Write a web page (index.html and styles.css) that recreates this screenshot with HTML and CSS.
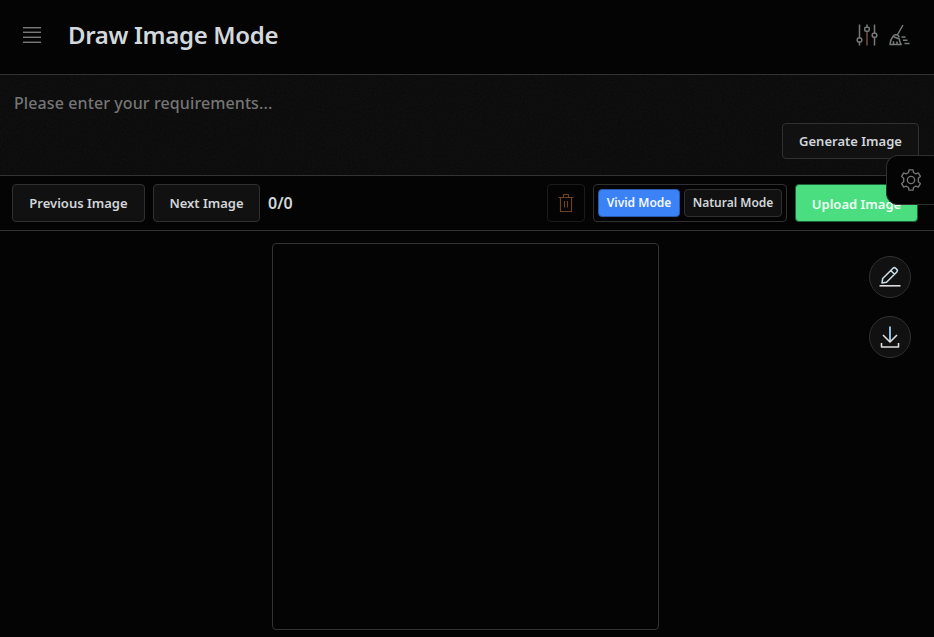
FILE: index.html
```html
<!DOCTYPE html>
<html lang="en">
<head>
<meta charset="utf-8">
<title>Draw Image Mode</title>
<link rel="stylesheet" href="styles.css">
</head>
<body>
<header class="header">
  <svg class="menu" viewBox="0 0 18 16" shape-rendering="crispEdges"><path d="M0 .5h18M0 5.5h18M0 10.500h18M0 15.500h18"/><path class="menu-shade" d="M0 1.500h18M0 4.500h18M0 9.500h18M0 14.500h18"/></svg>
  <h1 class="title">Draw Image Mode</h1>
  <svg class="icon sliders" viewBox="0 0 24 24"><path d="M4.500 1.500v13.500M4.500 19v3.500M12 1.500v2.800M19.500 1.500v8.500M19.500 14v8.500"/><path class="warm" d="M12 8.500v14"/><rect x="2.200" y="15" width="4.600" height="4" rx="1.500"/><rect x="9.700" y="4.300" width="4.600" height="4" rx="1.500"/><rect x="17.200" y="10.200" width="4.600" height="4" rx="1.500"/></svg>
  <svg class="icon broom" viewBox="0 0 24 24"><path d="M15 2 9.300 12M5 13.500c1.500-2.700 5.500-2.200 6.300 1M5 13.500l6.300 2.500c.2 2.300.8 4 1.900 5.500H2c.2-3.700 1.200-6 3-8zM5.500 21v-2.800M9 21.500V18.500M13.500 14h4M15 17.200h4.500M16.500 20.500h5"/></svg>
</header>
<section class="prompt">
  <svg class="grain" aria-hidden="true"><filter id="grain"><feTurbulence type="fractalNoise" baseFrequency=".55" numOctaves="3"/><feColorMatrix type="saturate" values="0"/></filter><rect width="100%" height="100%" filter="url(#grain)"/></svg>
  <div class="placeholder">Please enter your requirements...</div>
  <button class="btn generate">Generate Image</button>
</section>
<section class="toolbar">
  <button class="btn previous">Previous Image</button>
  <button class="btn next">Next Image</button>
  <span class="count">0/0</span>
  <button class="btn trash"><svg viewBox="0 0 18 20"><path d="M1.500 4.500h15M6.500 4V1.500h5V4M3.500 4.500V18.500h11V4.500M7.500 8v6.500M10.500 8v6.500"/></svg></button>
  <div class="modes"><button class="mode vivid">Vivid Mode</button><button class="mode natural">Natural Mode</button></div>
  <button class="btn upload">Upload Image</button>
</section>
<main class="stage">
  <div class="canvas"></div>
  <div class="actions">
    <button class="round"><svg viewBox="0 0 24 24"><path d="M1.500 20.800h21"/><path class="cool" d="M4 18l.7-4.500L15 3.200c.8-.8 1.800-.8 2.600 0l1.200 1.200c.8.8.8 1.800 0 2.600L8.500 17.300zM12.800 5.500l3.700 3.700"/></svg></button>
    <button class="round"><svg viewBox="0 0 24 24"><path class="shaft" d="M12 1.500v15"/><path d="M5 10l7 7 7-7M3.500 18v4h17v-4"/></svg></button>
  </div>
</main>
<button class="settings"><svg viewBox="0 0 24 24"><circle cx="12" cy="12" r="4"/><path d="M9.300 3.800 9.800 1h4.400l.5 2.800 2.600 1.500 2.700-1 2.200 3.800-2.200 1.900v4l2.200 1.900-2.200 3.800-2.700-1-2.600 1.500-.5 2.800H9.800l-.5-2.800-2.600-1.500-2.700 1-2.200-3.800L4 14v-4L1.800 8.100 4 4.300l2.700 1z"/></svg></button>
</body>
</html>
```
FILE: styles.css
```css
* { box-sizing: border-box; }
body {
  margin: 0;
  height: 637px;
  display: flex;
  flex-direction: column;
  overflow: hidden;
  position: relative;
  background: #040404;
  color: #d2d6da;
  font-family: "Noto Sans", sans-serif;
}
svg { display: block; fill: none; stroke: currentColor; stroke-width: 1.5; stroke-linejoin: round; }
button { font: inherit; color: inherit; padding: 0; margin: 0; }
.header {
  flex: none;
  height: 75px;
  padding: 0 22px 0 23px;
  display: flex;
  align-items: center;
  border-bottom: 1px solid #333;
  color: #777a7a;
}
.menu { width: 18px; height: 16px; stroke-width: 1; margin-top: -4px; }
.menu-shade { stroke: #343434; }
.title {
  margin: -4px auto 0 27px;
  color: #d2d8dc;
  font-size: 24px;
  line-height: 34px;
  font-weight: 600;
  letter-spacing: -.33px;
}
.icon { width: 24px; height: 24px; margin-top: -4px; }
.sliders { margin-right: 9px; }
.warm { stroke: #705141; }
.prompt {
  flex: none;
  height: 101px;
  position: relative;
  display: flex;
  flex-direction: column;
  padding: 16px 15px 16px 14px;
  border-bottom: 1px solid #333;
  background: #0a0a0a;
}
.grain { position: absolute; inset: 0; width: 100%; height: 100%; opacity: .04; stroke: none; }
.placeholder { position: relative; font-size: 16px; line-height: 24px; font-weight: 500; letter-spacing: .1px; color: #757575; }
.btn {
  height: 38px;
  border: 1px solid #303030;
  border-radius: 4px;
  background: #111;
  font-size: 13px;
  font-weight: 600;
  white-space: nowrap;
}
.generate { position: relative; width: 137px; height: 36px; margin: auto 0 0 auto; }
.toolbar {
  flex: none;
  height: 55px;
  display: flex;
  align-items: center;
  padding: 0 16px 0 12px;
  border-bottom: 1px solid #333;
}
.previous { width: 133px; margin-right: 8px; }
.next { width: 107px; margin-right: 8px; }
.count { font-size: 16px; font-weight: 600; margin-right: auto; }
.trash { width: 38px; display: grid; place-items: center; background: #040404; border-color: #1b1b1b; color: #6b4229; margin-right: 8px; }
.trash svg { width: 18px; height: 20px; stroke-width: 1.2; }
.modes {
  width: 194px;
  height: 38px;
  display: flex;
  align-items: center;
  gap: 4px;
  padding: 4px;
  border: 1px solid #303030;
  border-radius: 4px;
  margin-right: 8px;
}
.mode { height: 28px; border: 1px solid #303030; border-radius: 4px; background: #111; font-size: 12px; font-weight: 600; padding-bottom: 1px; }
.vivid { width: 82px; background: #3b82f6; border-color: #285bad; color: #f2f7ff; }
.natural { width: 98px; }
.upload { width: 123px; background: #4ade80; border-color: #206238; color: #f2fff6; padding-top: 2px; }
.stage { flex: 1; position: relative; display: flex; justify-content: center; padding: 12px 3px 0 0; }
.canvas { width: 387px; height: 387px; border: 1px solid #333; border-radius: 4px; }
.actions { position: absolute; right: 23px; top: 25px; display: flex; flex-direction: column; gap: 18px; }
.round { width: 42px; height: 42px; border: 1px solid #303030; border-radius: 50%; background: #111; display: grid; place-items: center; color: #dedede; }
.round svg { width: 24px; height: 24px; stroke-width: 1.6; }
.cool { stroke: #c8dde7; }
.shaft { stroke: #8fbdda; stroke-width: 2; }
.settings {
  position: absolute;
  right: 0;
  top: 155px;
  width: 48px;
  height: 50px;
  padding-left: 13px;
  border: 1px solid #303030;
  border-right: 0;
  border-radius: 12px 0 0 12px;
  background: #040404;
  color: #747474;
}
.settings svg { width: 22px; height: 22px; }
```
